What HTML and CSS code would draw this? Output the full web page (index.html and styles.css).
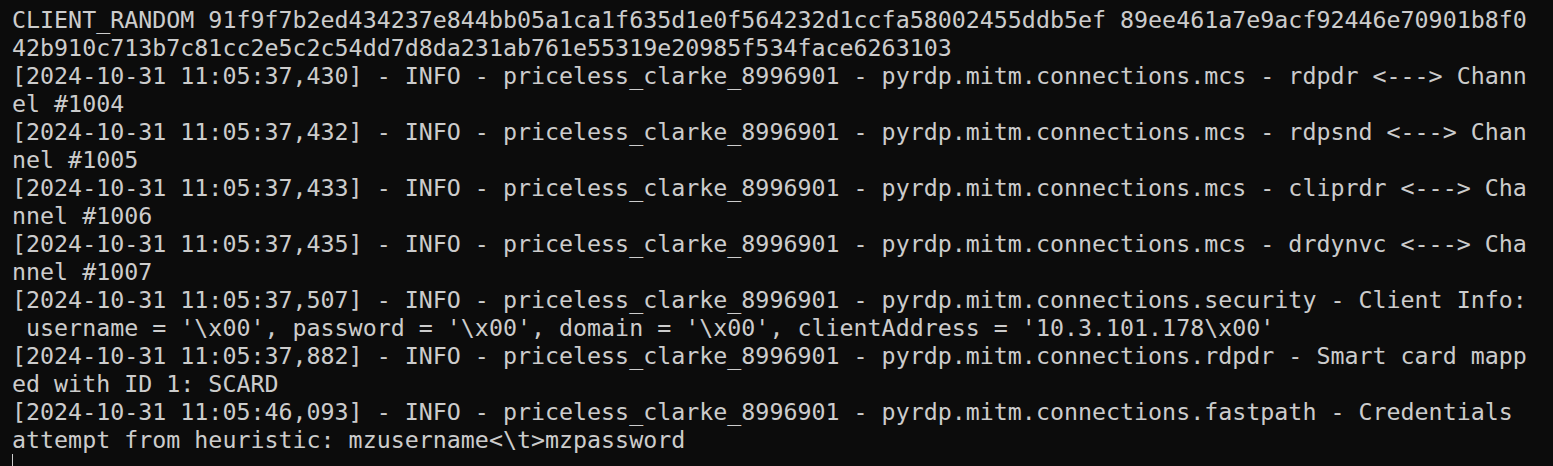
FILE: index.html
```html
<!DOCTYPE html>
<html>
<head>
<meta charset="utf-8">
<link rel="stylesheet" href="styles.css">
</head>
<body>
<div class="term">
<div class="line">CLIENT_RANDOM 91f9f7b2ed434237e844bb05a1ca1f635d1e0f564232d1ccfa58002455ddb5ef 89ee461a7e9acf92446e70901b8f0</div>
<div class="line">42b910c713b7c81cc2e5c2c54dd7d8da231ab761e55319e20985f534face6263103</div>
<div class="line">[2024-10-31 11:05:37,430] - INFO - priceless_clarke_8996901 - pyrdp.mitm.connections.mcs - rdpdr &lt;---&gt; Chann</div>
<div class="line">el #1004</div>
<div class="line">[2024-10-31 11:05:37,432] - INFO - priceless_clarke_8996901 - pyrdp.mitm.connections.mcs - rdpsnd &lt;---&gt; Chan</div>
<div class="line">nel #1005</div>
<div class="line">[2024-10-31 11:05:37,433] - INFO - priceless_clarke_8996901 - pyrdp.mitm.connections.mcs - cliprdr &lt;---&gt; Cha</div>
<div class="line">nnel #1006</div>
<div class="line">[2024-10-31 11:05:37,435] - INFO - priceless_clarke_8996901 - pyrdp.mitm.connections.mcs - drdynvc &lt;---&gt; Cha</div>
<div class="line">nnel #1007</div>
<div class="line">[2024-10-31 11:05:37,507] - INFO - priceless_clarke_8996901 - pyrdp.mitm.connections.security - Client Info:</div>
<div class="line"> username = '\x00', password = '\x00', domain = '\x00', clientAddress = '10.3.101.178\x00'</div>
<div class="line">[2024-10-31 11:05:37,882] - INFO - priceless_clarke_8996901 - pyrdp.mitm.connections.rdpdr - Smart card mapp</div>
<div class="line">ed with ID 1: SCARD</div>
<div class="line">[2024-10-31 11:05:46,093] - INFO - priceless_clarke_8996901 - pyrdp.mitm.connections.fastpath - Credentials</div>
<div class="line">attempt from heuristic: mzusername&lt;\t&gt;mzpassword</div>
<div class="line"><span class="cursor"></span></div>
</div>
</body>
</html>
```
FILE: styles.css
```css
html, body {
  margin: 0;
  padding: 0;
  background: #0c0c0c;
  height: 100%;
  overflow: hidden;
}
.term {
  padding: 6px 0 0 12px;
  font-family: "DejaVu Sans Mono", "Liberation Mono", monospace;
  font-size: 23.3px;
  line-height: 28px;
  color: #cccccc;
}
.line {
  white-space: pre;
  height: 28px;
}
.cursor {
  display: inline-block;
  width: 1px;
  height: 14px;
  background: #cccccc;
  vertical-align: top;
}
```
